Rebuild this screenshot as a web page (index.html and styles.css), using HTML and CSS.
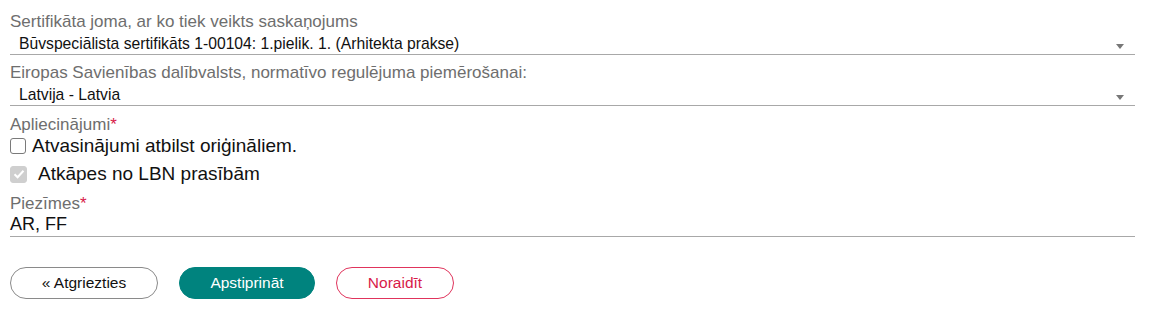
FILE: index.html
```html
<!DOCTYPE html>
<html lang="lv">
<head>
<meta charset="utf-8">
<link rel="stylesheet" href="styles.css">
</head>
<body>
<div class="form">
  <div class="field">
    <div class="label">Sertifikāta joma, ar ko tiek veikts saskaņojums</div>
    <div class="select">
      <span class="value">Būvspeciālista sertifikāts 1-00104: 1.pielik. 1. (Arhitekta prakse)</span>
      <svg class="arrow" width="8" height="5" viewBox="0 0 8 5"><path d="M0 0H8L4 5Z" fill="#777"/></svg>
    </div>
  </div>
  <div class="field">
    <div class="label">Eiropas Savienības dalībvalsts, normatīvo regulējuma piemērošanai:</div>
    <div class="select">
      <span class="value">Latvija - Latvia</span>
      <svg class="arrow" width="8" height="5" viewBox="0 0 8 5"><path d="M0 0H8L4 5Z" fill="#777"/></svg>
    </div>
  </div>
  <div class="field field-checks">
    <div class="label">Apliecinājumi<span class="req">*</span></div>
    <label class="check">
      <span class="box"></span>
      <span class="check-text">Atvasinājumi atbilst oriģināliem.</span>
    </label>
    <label class="check check-disabled">
      <span class="box box-checked">
        <svg width="12" height="10" viewBox="0 0 12 10"><path d="M1.5 5.2L4.6 8.2L10.5 1.8" fill="none" stroke="#fff" stroke-width="2"/></svg>
      </span>
      <span class="check-text">Atkāpes no LBN prasībām</span>
    </label>
  </div>
  <div class="field">
    <div class="label">Piezīmes<span class="req">*</span></div>
    <div class="input">AR, FF</div>
  </div>
  <div class="actions">
    <button class="btn btn-back">« Atgriezties</button>
    <button class="btn btn-ok">Apstiprināt</button>
    <button class="btn btn-no">Noraidīt</button>
  </div>
</div>
</body>
</html>
```

FILE: styles.css
```css
html, body {
  margin: 0;
  padding: 0;
  background: #fff;
}
body {
  font-family: "Liberation Sans", Arial, sans-serif;
  color: #111;
}
.form {
  padding: 11px 37px 0 10px;
}
.field {
  display: flex;
  flex-direction: column;
}
.label {
  font-size: 17px;
  line-height: 21px;
  color: #6e6e6e;
}
.req {
  color: #d81b4a;
}
.select {
  display: flex;
  align-items: center;
  justify-content: space-between;
  border-bottom: 1px solid #a8a8a8;
  height: 22px;
  padding: 0 11px 0 9px;
  margin-bottom: 7px;
}
.value {
  font-size: 15.7px;
  color: #111;
  margin-top: 1px;
}
.arrow {
  margin-top: 6px;
}
.field-checks {
  padding-top: 1px;
}
.check {
  display: flex;
  align-items: center;
  font-size: 19px;
  height: 22px;
}
.box {
  box-sizing: border-box;
  width: 16px;
  height: 16px;
  border: 1px solid #7a7a7a;
  border-radius: 3px;
  margin-right: 6px;
  display: flex;
  align-items: center;
  justify-content: center;
}
.box-checked {
  background: #cfcfcf;
  border-color: #cfcfcf;
  width: 17px;
  height: 17px;
  margin-right: 11px;
}
.check-disabled {
  margin-top: 6px;
  margin-bottom: 8px;
}
.check-text {
  color: #111;
}
.input {
  font-size: 18px;
  line-height: 20px;
  border-bottom: 1px solid #a8a8a8;
  padding-bottom: 2px;
}
.actions {
  display: flex;
  gap: 21px;
  margin-top: 30px;
}
.btn {
  font-family: "Liberation Sans", Arial, sans-serif;
  font-size: 15.5px;
  height: 32px;
  border-radius: 16px;
  padding: 0;
  background: #fff;
  cursor: pointer;
}
.btn-back {
  width: 148px;
  border: 1px solid #8a8a8a;
  color: #111;
}
.btn-ok {
  width: 136px;
  border: 1px solid #00837e;
  background: #00837e;
  color: #fff;
}
.btn-no {
  width: 118px;
  border: 1px solid #e0345c;
  color: #d81b4a;
}
```
